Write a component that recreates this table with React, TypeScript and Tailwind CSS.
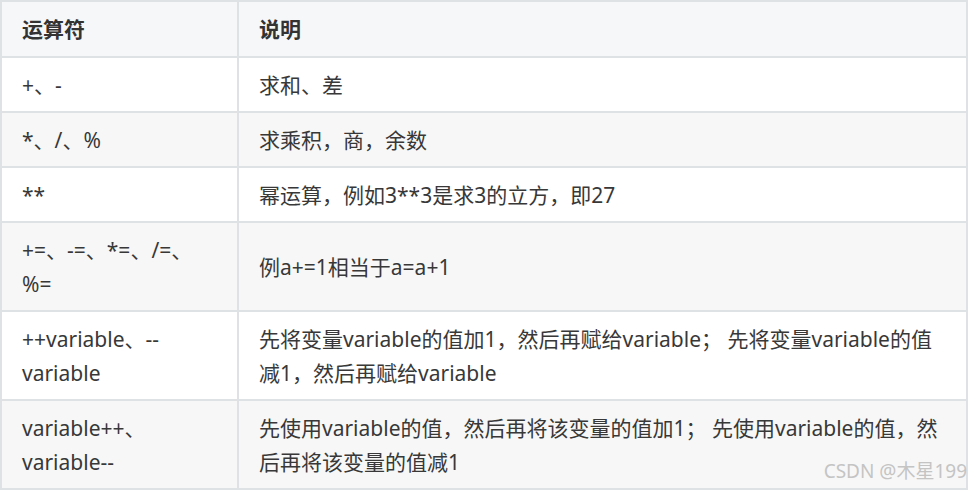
import React from "react";

interface Row {
  op: React.ReactNode;
  desc: React.ReactNode;
}

const rows: Row[] = [
  { op: "+、-", desc: "求和、差" },
  { op: "*、/、%", desc: "求乘积，商，余数" },
  { op: "**", desc: "幂运算，例如3**3是求3的立方，即27" },
  {
    op: (
      <>
        +=、-=、*=、/=、
        <br />
        %=
      </>
    ),
    desc: "例a+=1相当于a=a+1",
  },
  {
    op: (
      <>
        ++variable、--
        <br />
        variable
      </>
    ),
    desc: (
      <>
        先将变量variable的值加1，然后再赋给variable； 先将变量variable的值
        <br />
        减1，然后再赋给variable
      </>
    ),
  },
  {
    op: (
      <>
        variable++、
        <br />
        variable--
      </>
    ),
    desc: (
      <>
        先使用variable的值，然后再将该变量的值加1； 先使用variable的值，然
        <br />
        后再将该变量的值减1
      </>
    ),
  },
];

export default function App() {
  return (
    <div className="relative h-[490px] w-[970px] overflow-hidden bg-white font-['Noto_Sans','Noto_Sans_CJK_SC',sans-serif] text-[21px] leading-[34px] text-[#383838]">
      <table className="w-[968px] table-fixed border-separate border-spacing-0 border-l-2 border-t-2 border-[#dfe2e5]">
        <colgroup>
          <col className="w-[237px]" />
          <col />
        </colgroup>
        <thead>
          <tr className="bg-[#f6f7f8]">
            <th className="border-b-2 border-r-2 border-[#dfe2e5] px-[20px] py-[10px] text-left font-bold text-[#333]">
              运算符
            </th>
            <th className="border-b-2 border-r-2 border-[#dfe2e5] px-[20px] py-[10px] text-left font-bold text-[#333]">
              说明
            </th>
          </tr>
        </thead>
        <tbody>
          {rows.map((r, i) => (
            <tr key={i} className={i % 2 === 1 ? "bg-[#f7f7f7]" : "bg-white"}>
              <td className="whitespace-nowrap border-b-2 border-r-2 border-[#dfe2e5] px-[20px] py-[9.5px] align-middle">
                {r.op}
              </td>
              <td className="whitespace-nowrap border-b-2 border-r-2 border-[#dfe2e5] px-[20px] py-[9.5px] align-middle">
                {r.desc}
              </td>
            </tr>
          ))}
        </tbody>
      </table>

      {/* watermark */}
      <div className="absolute bottom-[7px] right-[3px] text-[19px] leading-[24px] text-[#c4c4c4]">
        CSDN @木星199
      </div>
    </div>
  );
}
